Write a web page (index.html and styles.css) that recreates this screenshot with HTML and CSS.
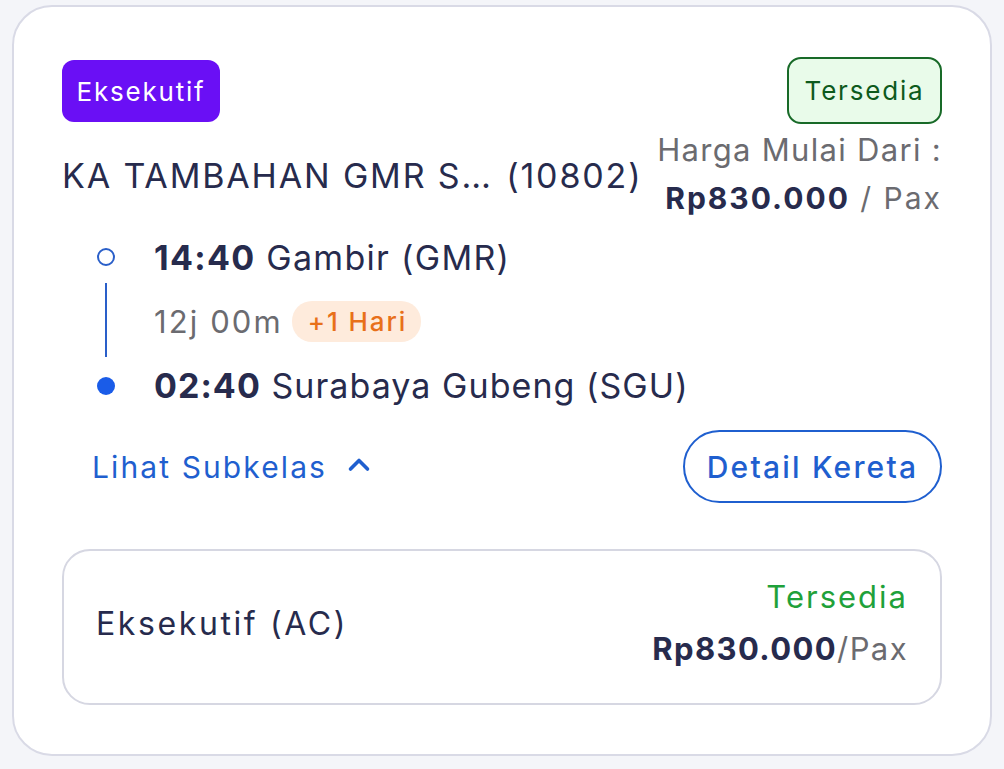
FILE: index.html
```html
<!DOCTYPE html>
<html lang="id">
<head>
<meta charset="utf-8">
<title>Kereta</title>
<link rel="stylesheet" href="styles.css">
</head>
<body>
<div class="card">
  <div class="row-top">
    <span class="tag">Eksekutif</span>
    <span class="badge">Tersedia</span>
  </div>
  <div class="row-title">
    <div class="title"><span class="name">KA TAMBAHAN GMR S…</span> <span class="num">(10802)</span></div>
    <div class="price-block">
      <div class="from">Harga Mulai Dari :</div>
      <div class="price"><b>Rp830.000</b> / Pax</div>
    </div>
  </div>
  <div class="timeline">
    <div class="mark"><span class="dot dot-open"></span></div>
    <div class="stop"><b>14:40</b> Gambir (GMR)</div>
    <div class="mark"><span class="vline"></span></div>
    <div class="dur">12j 00m <span class="plus">+1 Hari</span></div>
    <div class="mark"><span class="dot dot-fill"></span></div>
    <div class="stop stop-end"><b>02:40</b> Surabaya Gubeng (SGU)</div>
  </div>
  <div class="actions">
    <span class="sub-link">Lihat Subkelas
      <svg class="chev" width="24" height="16" viewBox="0 0 24 16"><polyline points="3.5,13 12,4.5 20.5,13" fill="none" stroke="#1f5fcf" stroke-width="3.6" stroke-linecap="round" stroke-linejoin="round"/></svg>
    </span>
    <span class="detail-btn">Detail Kereta</span>
  </div>
  <div class="subcard">
    <div class="sub-name">Eksekutif (AC)</div>
    <div class="sub-right">
      <div class="sub-avail">Tersedia</div>
      <div class="sub-price"><b>Rp830.000</b>/Pax</div>
    </div>
  </div>
</div>
</body>
</html>
```

FILE: styles.css
```css
html, body {
  margin: 0;
  padding: 0;
  background: #f4f5f9;
}
body {
  font-family: Inter, "Noto Sans", sans-serif;
  color: #272b4d;
  padding: 5px 12px 0;
  height: 769px;
  box-sizing: border-box;
}
.card {
  background: #fff;
  border: 2px solid #d9dae6;
  border-radius: 40px;
  height: 751px;
  box-sizing: border-box;
  padding: 50px 48px 0;
}
.row-top {
  display: flex;
  justify-content: space-between;
  align-items: center;
  height: 66px;
}
.tag {
  background: #6a0ff5;
  color: #fff;
  font-size: 26px;
  letter-spacing: 1.8px;
  height: 62px;
  width: 158px;
  display: flex;
  align-items: center;
  justify-content: center;
  border-radius: 12px;
  box-sizing: border-box;
  margin-top: 2px;
}
.badge {
  background: #e9fbea;
  color: #0d5a1c;
  border: 2px solid #186a28;
  font-size: 26px;
  letter-spacing: 1.8px;
  height: 67px;
  width: 155px;
  display: flex;
  align-items: center;
  justify-content: center;
  border-radius: 14px;
  box-sizing: border-box;
}
.row-title {
  display: flex;
  justify-content: space-between;
  align-items: center;
  height: 102px;
}
.title {
  font-size: 34px;
  letter-spacing: 1.85px;
  white-space: nowrap;
  padding-top: 2px;
}
.title .num { margin-left: 2px; }
.price-block {
  text-align: right;
  font-size: 31px;
  letter-spacing: 1.3px;
  line-height: 49px;
  color: #6b6b70;
}
.price {
  font-size: 30px;
  letter-spacing: 2px;
}
.price b {
  color: #272b4d;
  font-weight: 700;
}
.timeline {
  display: grid;
  grid-template-columns: 88px 1fr;
  column-gap: 4px;
  grid-template-rows: 64px 64px 65px;
  align-items: center;
}
.mark {
  display: flex;
  justify-content: center;
  align-items: center;
  height: 100%;
}
.dot {
  width: 18px;
  height: 18px;
  border-radius: 50%;
  box-sizing: border-box;
}
.dot-open {
  border: 2px solid #2a5fc9;
  background: #fff;
}
.dot-fill {
  background: #1a5ce8;
}
.vline {
  width: 2px;
  height: 74px;
  background: #2a5fc9;
  margin-top: -2px;
}
.stop {
  font-size: 34px;
  letter-spacing: 1.3px;
  white-space: nowrap;
}
.stop-end { letter-spacing: 1.05px; }
.stop b { font-weight: 700; }
.dur {
  font-size: 31px;
  letter-spacing: 2.1px;
  color: #6b6b70;
  display: flex;
  align-items: center;
}
.plus {
  background: #feebdc;
  color: #e8701a;
  font-size: 26px;
  letter-spacing: 1.9px;
  font-weight: 500;
  height: 41px;
  padding: 0 14px 0 16px;
  border-radius: 20px;
  display: inline-flex;
  align-items: center;
  margin-left: 9px;
}
.actions {
  display: flex;
  justify-content: space-between;
  align-items: center;
  margin-top: 12px;
  height: 73px;
}
.sub-link {
  color: #1f5fcf;
  font-size: 30px;
  letter-spacing: 2.1px;
  margin-left: 30px;
  display: flex;
  align-items: center;
}
.chev { margin-left: 20px; margin-top: -6px; }
.detail-btn {
  color: #1f5fcf;
  font-size: 30px;
  letter-spacing: 2.2px;
  font-weight: 500;
  border: 2px solid #1f5fcf;
  border-radius: 37px;
  height: 73px;
  width: 259px;
  box-sizing: border-box;
  display: flex;
  align-items: center;
  justify-content: center;
}
.subcard {
  margin-top: 46px;
  border: 2px solid #d6d7e2;
  border-radius: 28px;
  height: 156px;
  box-sizing: border-box;
  padding: 0 32px 8px;
  display: flex;
  justify-content: space-between;
  align-items: center;
}
.sub-name {
  font-size: 32px;
  letter-spacing: 2.6px;
}
.sub-right {
  text-align: right;
  line-height: 52px;
  font-size: 31px;
  letter-spacing: 1.4px;
}
.sub-avail { color: #1fa13a; letter-spacing: 2px; }
.sub-price { color: #6b6b70; }
.sub-price b { color: #272b4d; font-weight: 700; }
```
